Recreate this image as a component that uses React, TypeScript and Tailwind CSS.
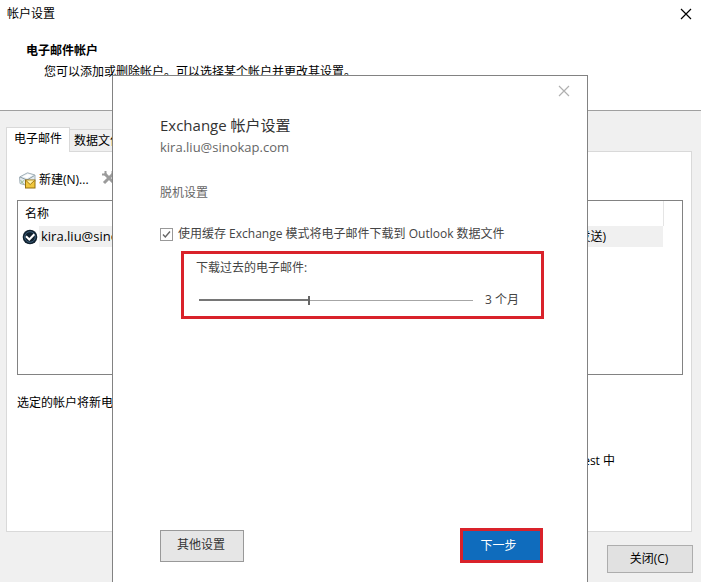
import React from 'react';

interface Account {
    name: string;
    type: string;
}

const accounts: Account[] = [
    { name: 'kira.liu@sinokap.com', type: '发送)' },
];

const CloseIcon: React.FC = () => (
    <svg width="12" height="12" viewBox="0 0 12 12" fill="none" stroke="currentColor" aria-hidden="true">
        <path d="M1 1L11 11M11 1L1 11" strokeWidth="1.2" />
    </svg>
);

const NewMailIcon: React.FC = () => (
    <svg width="17" height="17" viewBox="0 0 17 17" fill="none" aria-hidden="true">
        <path d="M0.5 5L8.5 0.8L16 3V9.5L8 13.5L1 11.5Z" fill="#e3ebf0" stroke="#a3b1b9" />
        <path d="M1 5L8 8L15.5 3.5" stroke="#8e9da6" />
        <path d="M3.5 4.5L9 2L13.5 3.3L8 6.3Z" fill="#fff" />
        <path d="M1.5 11.5L5.5 8M1.5 8L5 12.5" stroke="#9fc095" />
        <rect x="6.5" y="8" width="9.5" height="8" fill="#f0c63c" stroke="#94700f" />
        <path d="M7 8.5L11.2 12.5L15.5 8.5" fill="#fff0a6" stroke="#a57c14" />
    </svg>
);

const RepairIcon: React.FC = () => (
    <svg width="16" height="16" viewBox="0 0 16 16" fill="none" stroke="#9b9b9b" aria-hidden="true">
        <path d="M3.5 3.5L13 13M12.5 3.5L3 13" strokeWidth="3" />
        <path d="M1 4.5H4.5V1M11.5 1V4.5H15" strokeWidth="2" />
    </svg>
);

const DefaultIcon: React.FC = () => (
    <svg width="16" height="16" viewBox="0 0 16 16" fill="none" aria-hidden="true">
        <circle cx="8" cy="8" r="7.3" fill="#10202e" />
        <circle cx="8" cy="8" r="5.3" stroke="#3c607c" strokeWidth="1" />
        <path d="M4 7.2L7.3 10.5L12.3 5.2" stroke="#fff" strokeWidth="2" />
    </svg>
);

const AccountTable: React.FC = () => (
    <div className="h-[175px] border border-[#828282] bg-white">
        <table className="w-full table-fixed border-collapse text-left">
            <colgroup>
                <col />
                <col className="w-[200px]" />
                <col className="w-[19px]" />
            </colgroup>
            <thead>
                <tr className="h-[25px]">
                    <th className="pl-[7px] font-normal">名称</th>
                    <th className="border-r border-[#e5e5e5]" />
                    <th />
                </tr>
            </thead>
            <tbody>
                {accounts.map((account) => (
                    <tr key={account.name} className="h-[21px]">
                        <td className="p-0">
                            <div className="flex items-center gap-px pl-1">
                                <DefaultIcon />
                                <span className="flex-1 bg-[#f0f0f0] pl-0.5 text-[13px] leading-[21px]">{account.name}</span>
                            </div>
                        </td>
                        <td className="bg-[#f0f0f0] p-0 pr-[57px] text-right">{account.type}</td>
                        <td />
                    </tr>
                ))}
            </tbody>
        </table>
    </div>
);

const ExchangeDialog: React.FC = () => (
    <div
        role="dialog"
        aria-labelledby="exchange-title"
        className="absolute top-[75px] bottom-0 left-28 flex w-[476px] flex-col border border-b-0 border-[#828282] bg-white text-[#444]"
    >
        <div className="flex justify-end pr-2">
            <button type="button" aria-label="关闭" className="flex size-[30px] items-center justify-center text-[#b0b0b0]">
                <CloseIcon />
            </button>
        </div>
        <div className="flex flex-1 flex-col pt-[7px] pr-[43px] pb-[19px] pl-[47px]">
            <h2 id="exchange-title" className="text-[15px] leading-6 text-[#333]">Exchange 帐户设置</h2>
            <p className="text-[13px] leading-5 text-[#666]">kira.liu@sinokap.com</p>
            <h3 className="mt-[26px] leading-5 text-[#666]">脱机设置</h3>
            <label className="mt-[21px] flex items-center gap-[5px] leading-5 whitespace-nowrap">
                <span className="grid size-[13px] place-items-center">
                    <input
                        type="checkbox"
                        defaultChecked
                        className="peer col-start-1 row-start-1 size-[13px] appearance-none border border-[#999] bg-white"
                    />
                    <svg
                        width="11"
                        height="11"
                        viewBox="0 0 11 11"
                        fill="none"
                        className="pointer-events-none invisible col-start-1 row-start-1 peer-checked:visible"
                        aria-hidden="true"
                    >
                        <path d="M2 5.5L4.3 8L9 2.5" stroke="#666" strokeWidth="1.4" />
                    </svg>
                </span>
                使用缓存 Exchange 模式将电子邮件下载到 Outlook 数据文件
            </label>
            <div className="mt-[7px] ml-[21px] border-3 border-[#d9222a] pt-1 pr-[22px] pb-1.5 pl-3">
                <label htmlFor="months" className="block leading-5">下载过去的电子邮件:</label>
                <div className="mt-3 flex h-5 items-center gap-3 pl-[3px]">
                    <input
                        id="months"
                        type="range"
                        defaultValue="40"
                        className="h-[9px] min-w-0 flex-1 appearance-none bg-[linear-gradient(#767676,#767676),linear-gradient(#a6a6a6,#a6a6a6)] bg-[length:40%_2px,100%_1px] bg-[position:left_center] bg-no-repeat [&::-webkit-slider-thumb]:h-[9px] [&::-webkit-slider-thumb]:w-0.5 [&::-webkit-slider-thumb]:appearance-none [&::-webkit-slider-thumb]:bg-[#666]"
                    />
                    <output htmlFor="months" className="whitespace-nowrap">3 个月</output>
                </div>
            </div>
            <div className="mt-auto flex items-center justify-between pr-px">
                <button type="button" className="h-8 w-[84px] border border-[#999] bg-[#e6e6e6] pr-0.5 pb-0.5 text-[#333]">
                    其他设置
                </button>
                <button type="button" className="h-[35px] w-[83px] border-3 border-[#d9222a] bg-[#0f6cbd] pr-1.5 text-white">
                    下一步
                </button>
            </div>
        </div>
    </div>
);

export default function App() {
    return (
        <div className="relative flex min-h-screen flex-col overflow-hidden bg-[#f0f0f0] font-['Open_Sans','Noto_Sans_CJK_SC',sans-serif] text-xs text-black">
            <header className="h-[111px] border-b border-[#a0a0a0] bg-white">
                <div className="flex h-7 items-center justify-between pr-[9px] pl-[7px]">
                    <h1>帐户设置</h1>
                    <button type="button" aria-label="关闭" className="p-0">
                        <CloseIcon />
                    </button>
                </div>
                <div className="mt-[13px] pl-[26px] leading-5">
                    <h2 className="font-bold">电子邮件帐户</h2>
                    <p className="mt-px pl-[18px]">您可以添加或删除帐户。可以选择某个帐户并更改其设置。</p>
                </div>
            </header>
            <main className="flex flex-1 flex-col pt-4 pr-[9px] pl-1.5">
                <div role="tablist" className="flex h-6 items-end">
                    <button
                        type="button"
                        role="tab"
                        aria-selected="true"
                        className="z-10 -mb-px h-[25px] w-16 border border-b-0 border-[#d9d9d9] bg-white pb-0.5"
                    >
                        电子邮件
                    </button>
                    <button
                        type="button"
                        role="tab"
                        aria-selected="false"
                        className="h-[22px] w-16 border border-b-0 border-l-0 border-[#d9d9d9] pl-1 text-left"
                    >
                        数据文件
                    </button>
                </div>
                <section className="flex-1 border border-[#d9d9d9] bg-white pt-[18px] pr-2 pl-2.5">
                    <div className="flex h-5 items-center gap-3 pl-0.5">
                        <button type="button" className="flex items-center gap-[3px]">
                            <NewMailIcon />
                            新建(N)...
                        </button>
                        <button type="button" aria-label="修复" className="pb-1">
                            <RepairIcon />
                        </button>
                    </div>
                    <div className="mt-2.5">
                        <AccountTable />
                    </div>
                    <p className="mt-[18px] leading-5">选定的帐户将新电子邮件</p>
                    <p className="mt-[38px] pr-[68px] text-right leading-5">est 中</p>
                </section>
                <footer className="flex h-[50px] items-center justify-end pt-[3px]">
                    <button type="button" className="-mr-px h-7 w-[86px] border border-[#adadad] bg-[#e1e1e1] pr-0.5">
                        关闭(C)
                    </button>
                </footer>
            </main>
            <ExchangeDialog />
        </div>
    );
}
